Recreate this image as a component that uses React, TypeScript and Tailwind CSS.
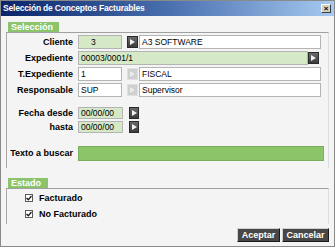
import React from 'react';

const font = { fontFamily: '"Liberation Sans", Arial, sans-serif' };

function ArrowBtn({ disabled = false, className = '' }: { disabled?: boolean; className?: string }) {
  return (
    <div
      className={`flex items-center justify-center border ${
        disabled
          ? 'bg-[#cfcfcf] border-[#e0e0e0]'
          : 'bg-gradient-to-b from-[#6a6a6a] to-[#3c3c3c] border-[#2a2a2a]'
      } ${className}`}
    >
      <svg width="5" height="6" viewBox="0 0 5 6">
        <path d="M0 0 L5 3 L0 6 Z" fill={disabled ? '#ececec' : '#f0f0f0'} />
      </svg>
    </div>
  );
}

function Field({ value = '', green = false, className = '' }: { value?: string; green?: boolean; className?: string }) {
  return (
    <div
      className={`flex items-center px-[2px] border border-[#b4b4b4] text-[8.5px] leading-none text-black whitespace-nowrap ${
        green ? 'bg-[#d6e9c6]' : 'bg-white'
      } ${className}`}
    >
      {value}
    </div>
  );
}

function Label({ children }: { children: React.ReactNode }) {
  return (
    <div className="w-[67px] pr-[1px] text-right text-[9px] font-bold text-black leading-none whitespace-nowrap">
      {children}
    </div>
  );
}

function Tab({ children, w }: { children: React.ReactNode; w: string }) {
  return (
    <div className={`ml-[2px] h-[10px] ${w} bg-[#8cc46c] text-white font-bold text-[9px] leading-[10px] pl-[3px]`}>
      {children}
    </div>
  );
}

function Check({ label }: { label: string }) {
  return (
    <div className="flex items-center h-[14px] pl-[18px] gap-[6px]">
      <div className="w-[8px] h-[8px] border border-[#5a5a5a] bg-white flex items-center justify-center">
        <svg width="6" height="6" viewBox="0 0 6 6">
          <path d="M0.5 3 L2.3 4.8 L5.5 1" stroke="#222" strokeWidth="1.4" fill="none" />
        </svg>
      </div>
      <span className="text-[9px] font-bold text-black leading-none">{label}</span>
    </div>
  );
}

export default function App() {
  return (
    <div style={font} className="w-[335px] h-[247px] bg-[#f4f4f4] border border-[#8a8a8a] flex flex-col overflow-hidden">
      {/* Title bar */}
      <div className="h-[15px] flex items-center justify-between bg-gradient-to-r from-[#0a246a] via-[#4a6fae] to-[#a6caf0] pl-[2px] pr-[3px]">
        <span className="text-white font-bold text-[8.5px] tracking-[-0.2px] leading-none">
          Selección de Conceptos Facturables
        </span>
        <div className="w-[10px] h-[9px] bg-[#d4d0c8] border border-t-white border-l-white border-r-[#404040] border-b-[#404040] flex items-center justify-center text-[8px] font-bold leading-none text-black">
          ×
        </div>
      </div>

      <div className="flex-1 flex flex-col px-[5px] pt-[6px]">
        {/* Selección */}
        <Tab w="w-[51px]">Selección</Tab>
        <div className="border-t border-l border-r border-t-[#a0a0a0] border-l-[#a8a8a8] border-r-[#dedede] pt-[2px] pb-[7px] flex flex-col">
          <div className="flex flex-col gap-[2px]">
            <div className="flex items-center h-[14px] gap-[4px]">
              <Label>Cliente</Label>
              <Field green value="3" className="w-[44px] h-[14px] pl-[12px]" />
              <ArrowBtn className="w-[11px] h-[12px] ml-[1px]" />
              <Field value="A3 SOFTWARE" className="flex-1 h-[14px] mr-[7px] -ml-[3px]" />
            </div>
            <div className="flex items-center h-[14px] gap-[4px]">
              <Label>Expediente</Label>
              <Field green value="00003/0001/1" className="w-[230px] h-[14px]" />
              <ArrowBtn className="w-[11px] h-[12px] -ml-[4px]" />
            </div>
            <div className="flex items-center h-[14px] gap-[4px]">
              <Label>T.Expediente</Label>
              <Field value="1" className="w-[44px] h-[14px]" />
              <ArrowBtn disabled className="w-[11px] h-[12px] ml-[1px]" />
              <Field value="FISCAL" className="flex-1 h-[14px] mr-[7px] -ml-[3px]" />
            </div>
            <div className="flex items-center h-[14px] gap-[4px]">
              <Label>Responsable</Label>
              <Field value="SUP" className="w-[44px] h-[14px]" />
              <ArrowBtn disabled className="w-[11px] h-[12px] ml-[1px]" />
              <Field value="Supervisor" className="flex-1 h-[14px] mr-[7px] -ml-[3px]" />
            </div>
          </div>

          <div className="flex flex-col gap-[2px] mt-[10px]">
            <div className="flex items-center h-[12px] gap-[4px]">
              <Label>Fecha desde</Label>
              <Field green value="00/00/00" className="w-[45px] h-[12px]" />
              <ArrowBtn className="w-[10px] h-[12px] ml-[2px]" />
            </div>
            <div className="flex items-center h-[12px] gap-[4px]">
              <Label>hasta</Label>
              <Field green value="00/00/00" className="w-[45px] h-[12px]" />
              <ArrowBtn className="w-[10px] h-[12px] ml-[2px]" />
            </div>
          </div>

          <div className="flex items-center h-[15px] gap-[4px] mt-[13px]">
            <Label>Texto a buscar</Label>
            <div className="flex-1 h-[15px] mr-[4px] bg-[#8cc46a] border border-[#7aae5c]" />
          </div>
        </div>

        {/* Estado */}
        <div className="mt-[10px]">
          <Tab w="w-[40px]">Estado</Tab>
        </div>
        <div className="border-t border-l border-r border-t-[#a0a0a0] border-l-[#a8a8a8] border-r-[#dedede] pt-[2px] pb-[3px] flex flex-col gap-[2px]">
          <Check label="Facturado" />
          <Check label="No Facturado" />
        </div>

        {/* Buttons */}
        <div className="flex justify-end gap-[2px] mt-[4px]">
          <button className="w-[43px] h-[14px] bg-[#474747] border border-t-[#cfcfcf] border-l-[#cfcfcf] border-r-[#1a1a1a] border-b-[#1a1a1a] text-white font-bold text-[9px] leading-none">
            Aceptar
          </button>
          <button className="w-[47px] h-[14px] bg-[#474747] border border-t-[#cfcfcf] border-l-[#cfcfcf] border-r-[#1a1a1a] border-b-[#1a1a1a] text-white font-bold text-[9px] leading-none">
            Cancelar
          </button>
        </div>
      </div>
    </div>
  );
}
